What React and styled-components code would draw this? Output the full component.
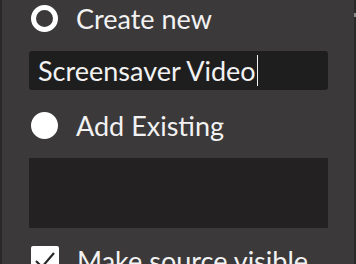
import React from 'react';
import styled, { createGlobalStyle } from 'styled-components';

const Global = createGlobalStyle`
  html, body {
    margin: 0;
    padding: 0;
    background: #3b393a;
    overflow: hidden;
  }
`;

const Frame = styled.div`
  display: flex;
  width: 356px;
  height: 264px;
  overflow: hidden;
  background: #3b393a;
  font-family: Lato, 'Liberation Sans', sans-serif;
  color: #f2f2f2;
`;

const Edge = styled.div`
  width: 2px;
  flex: none;
  background: #2a2828;
  padding-top: ${(p) => (p.$thumb ? '13px' : '0')};
  box-sizing: border-box;
`;

const Thumb = styled.div`
  height: 4px;
  background: #8a8888;
`;

const Content = styled.div`
  flex: 1;
  display: flex;
  flex-direction: column;
  padding: 0 26px 0 27px;
`;

const OptionRow = styled.label`
  display: flex;
  align-items: center;
  gap: 18px;
  height: 36px;
  flex: none;
  padding-left: 2px;
  margin-top: ${(p) => p.$top || 0}px;
  font-size: 27px;
  line-height: 1;
`;

const Radio = styled.span`
  width: 27px;
  height: 27px;
  box-sizing: border-box;
  border-radius: 50%;
  flex: none;
  background: ${(p) => (p.$checked ? '#ffffff' : 'transparent')};
  border: 5px solid #ffffff;
`;

const Check = styled.span`
  width: 28px;
  height: 28px;
  flex: none;
  border-radius: 2px;
  background: #ffffff;
  display: flex;
  align-items: center;
  justify-content: center;
`;

const TextField = styled.div`
  margin-top: 15px;
  height: 39px;
  flex: none;
  display: flex;
  align-items: center;
  padding-left: 9px;
  border-radius: 3px;
  background: #1f1e1e;
  font-size: 27px;
`;

const Caret = styled.span`
  width: 1px;
  height: 31px;
  margin-left: 1px;
  background: #f2f2f2;
`;

const ListBox = styled.div`
  margin-top: 15px;
  height: 70px;
  flex: none;
  background: #232121;
`;

export default function App() {
  return (
    <>
      <Global />
      <Frame>
        <Edge />
        <Content>
          <OptionRow>
            <Radio />
            Create new
          </OptionRow>
          <TextField>
            Screensaver Video
            <Caret />
          </TextField>
          <OptionRow $top={17}>
            <Radio $checked />
            Add Existing
          </OptionRow>
          <ListBox />
          <OptionRow $top={14}>
            <Check>
              <svg width="24" height="24" viewBox="0 0 24 24">
                <path d="M3 13 L9 19 L21 5" fill="none" stroke="#2a2828" strokeWidth="2.2" />
              </svg>
            </Check>
            Make source visible
          </OptionRow>
        </Content>
        <Edge $thumb>
          <Thumb />
        </Edge>
      </Frame>
    </>
  );
}
